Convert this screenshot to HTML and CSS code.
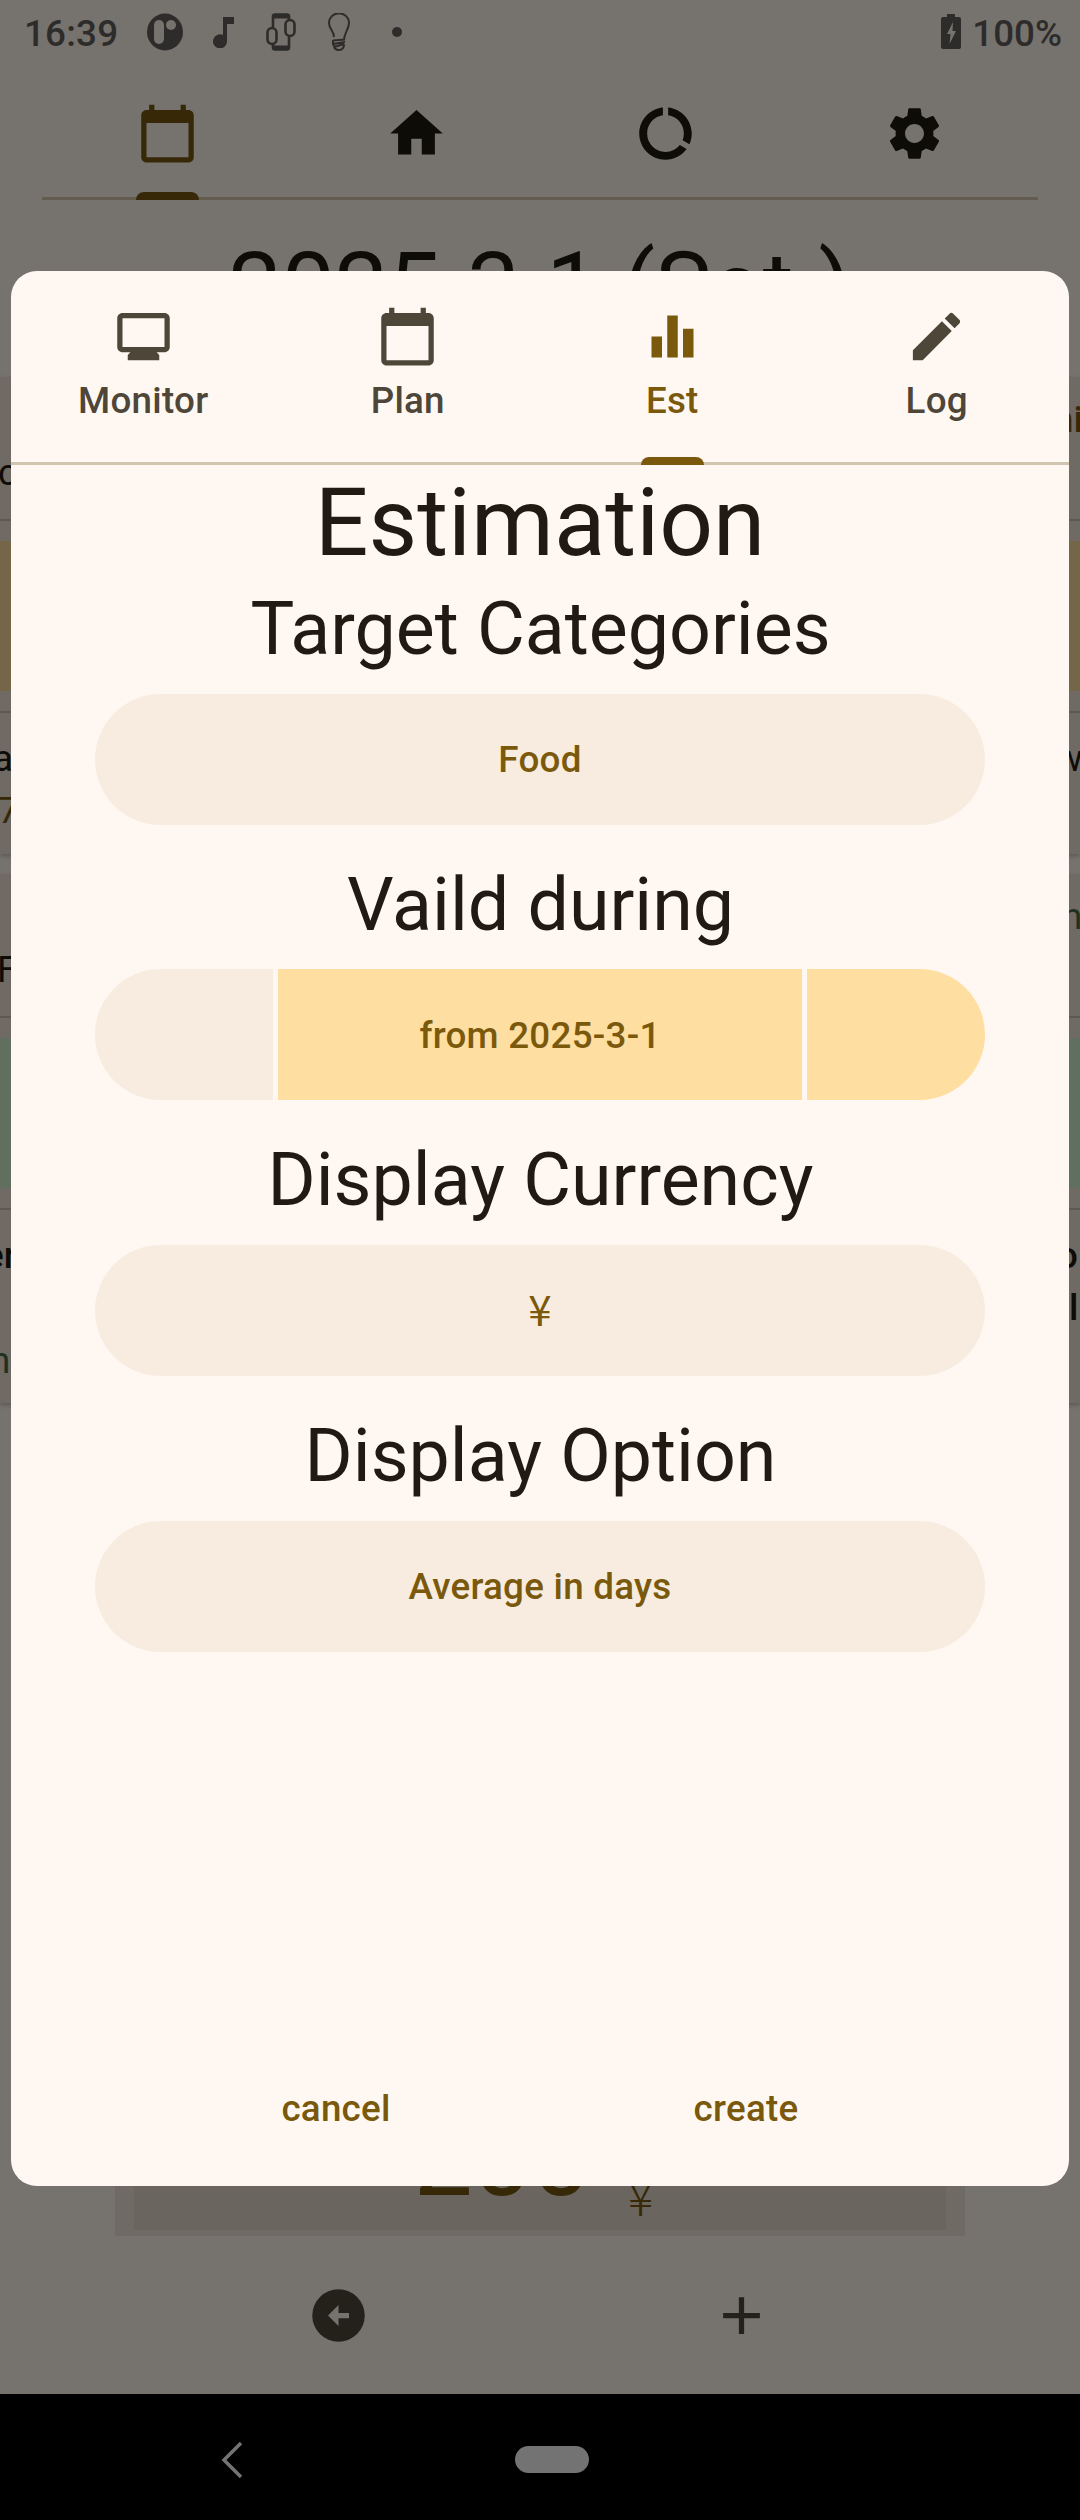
FILE: index.html
```html
<!DOCTYPE html>
<html lang="en">
<head>
<meta charset="utf-8">
<title>Estimation</title>
<link rel="stylesheet" href="styles.css">
</head>
<body>
<div class="screen">
  <header class="status">
    <span class="clock">16:39</span>
    <svg class="s-icon" width="36" height="38" viewBox="0 0 36 38"><ellipse cx="18" cy="19" rx="18" ry="18.5" fill="#2d2c2a"/><rect x="7" y="7" width="10" height="24" rx="5" fill="#76726e"/><circle cx="24" cy="12" r="5" fill="#76726e"/></svg>
    <svg class="s-note" width="21" height="31" viewBox="0 0 21 31"><path d="M10 0h11v7h-7v17a7 7 0 1 1-4-6z" fill="#2d2c2a"/></svg>
    <svg class="s-watch" width="30" height="38" viewBox="0 0 30 38" fill="none" stroke="#2d2c2a" stroke-width="2.6"><path d="M7 14V3.500q0-2 2-2h12q2 0 2 2V7M23 24v10.500q0 2-2 2H9q-2 0-2-2V31"/><path d="M7 3.500h16M7 34.500h16" stroke-width="4"/><rect x="1.500" y="15" width="9" height="16" rx="4.500"/><rect x="19.500" y="7" width="9" height="16" rx="4.500"/></svg>
    <svg class="s-bulb" width="24" height="38" viewBox="0 0 24 38" fill="none" stroke="#2d2c2a" stroke-width="2"><path d="M7 24C7 18 2 16 2 10a9.800 9.500 0 0 1 20 0c0 6-5 10-5 17"/><path d="M6 27.500l12-1M6 27v4l12-2M7 34l10-3M7 32q0 5 5 5 5 0 5-6"/></svg>
    <span class="s-dot"></span>
    <svg class="s-batt" width="20" height="35" viewBox="0 0 20 35"><path d="M6 0h8v3h4q2 0 2 2v28q0 2-2 2H2q-2 0-2-2V5q0-2 2-2h4z" fill="#2d2c2a"/><path d="M12 8L6 20h3.500L8.500 30 15 17h-3.500z" fill="#76726e"/></svg>
    <span>100%</span>
  </header>

  <nav class="main-tabs">
    <div class="main-tab active"><svg class="icon" viewBox="0 0 24 24"><path d="M20 3h-1V1h-2v2H7V1H5v2H4c-1.100 0-2 .9-2 2v16c0 1.100.9 2 2 2h16c1.100 0 2-.9 2-2V5c0-1.100-.9-2-2-2zm0 18H4V8h16v13z"/></svg></div>
    <div class="main-tab"><svg class="icon" viewBox="0 0 24 24"><path d="M10 20v-6h4v6h5v-8h3L12 3 2 12h3v8z"/></svg></div>
    <div class="main-tab"><svg class="icon" viewBox="0 0 24 24"><path d="M13 2.050v3.030c3.390.49 6 3.390 6 6.920 0 .9-.18 1.750-.48 2.540l2.600 1.530c.56-1.240.88-2.620.88-4.070 0-5.180-3.950-9.450-9-9.950zM12 19c-3.870 0-7-3.130-7-7 0-3.530 2.610-6.430 6-6.920V2.050c-5.060.5-9 4.760-9 9.950 0 5.520 4.470 10 9.990 10 3.310 0 6.240-1.610 8.060-4.090l-2.600-1.530C16.170 17.980 14.210 19 12 19z"/></svg></div>
    <div class="main-tab"><svg class="icon" viewBox="0 0 24 24"><path d="M19.140 12.940c.04-.3.06-.61.06-.94 0-.32-.02-.64-.07-.94l2.030-1.580c.18-.14.23-.41.12-.61l-1.920-3.320c-.12-.22-.37-.29-.59-.22l-2.390.96c-.5-.38-1.030-.7-1.620-.94l-.36-2.540c-.04-.24-.24-.41-.48-.41h-3.840c-.24 0-.43.17-.47.41l-.36 2.540c-.59.24-1.130.57-1.620.94l-2.390-.96c-.22-.08-.47 0-.59.22L2.740 8.870c-.12.21-.08.47.12.61l2.030 1.580c-.05.3-.09.63-.09.94s.02.64.07.94l-2.030 1.580c-.18.14-.23.41-.12.61l1.920 3.320c.12.22.37.29.59.22l2.390-.96c.5.38 1.030.7 1.620.94l.36 2.540c.05.24.24.41.48.41h3.840c.24 0 .44-.17.47-.41l.36-2.540c.59-.24 1.130-.56 1.620-.94l2.390.96c.22.08.47 0 .59-.22l1.920-3.320c.12-.22.07-.47-.12-.61l-2.010-1.580zM12 15.600c-1.980 0-3.600-1.620-3.600-3.600s1.620-3.600 3.600-3.600 3.600 1.620 3.600 3.600-1.620 3.600-3.600 3.600z"/></svg></div>
  </nav>

  <h1 class="date">2025-3-1 (Sat.)</h1>

  <section class="cards">
    <article class="card">
      <div class="row top"><p class="edge low c">c</p><p class="edge ni">ni</p></div>
      <div class="band gold"></div>
      <div class="row bottom"><div class="edge"><p class="a">a</p><p class="seven">7</p></div><p class="edge w">w</p></div>
    </article>
    <article class="card">
      <div class="row top"><p class="edge low f">F</p><p class="edge n">n</p></div>
      <div class="band green"></div>
      <div class="row bottom tall"><div class="edge"><p class="er">er</p><p class="en">n</p></div><div class="edge"><p class="o">o</p><p class="l">l</p></div></div>
    </article>
  </section>

  <section class="total"><div class="total-inner"><span class="amount">200</span><span class="yen">¥</span></div></section>

  <div class="actions">
    <svg class="icon" viewBox="0 0 24 24"><path fill-rule="evenodd" d="M12 2a10 10 0 1 0 0 20 10 10 0 0 0 0-20zM12 16l-4-4 4-4v3h4v2h-4z"/></svg>
    <svg class="icon" viewBox="0 0 24 24"><path d="M19 13h-6v6h-2v-6H5v-2h6V5h2v6h6v2z"/></svg>
  </div>

  <footer class="sysnav">
    <svg class="back" width="22" height="38" viewBox="0 0 22 38"><path d="M20 2L3 19l17 17" fill="none" stroke="#737373" stroke-width="3.500"/></svg>
    <span class="home-pill"></span>
  </footer>

  <div class="dialog">
    <nav class="tabs">
      <div class="tab"><svg class="icon" viewBox="0 0 24 24"><path d="M20 3H4c-1.100 0-2 .9-2 2v11c0 1.100.9 2 2 2h3l-1 1v2h12v-2l-1-1h3c1.100 0 2-.9 2-2V5c0-1.100-.9-2-2-2zm0 13H4V5h16v11z"/></svg><span>Monitor</span></div>
      <div class="tab"><svg class="icon" viewBox="0 0 24 24"><path d="M20 3h-1V1h-2v2H7V1H5v2H4c-1.100 0-2 .9-2 2v16c0 1.100.9 2 2 2h16c1.100 0 2-.9 2-2V5c0-1.100-.9-2-2-2zm0 18H4V8h16v13z"/></svg><span>Plan</span></div>
      <div class="tab active"><svg class="icon" viewBox="0 0 24 24"><path d="M10 20h4V4h-4v16zm-6 0h4v-8H4v8zM16 9v11h4V9h-4z"/></svg><span>Est</span></div>
      <div class="tab"><svg class="icon" viewBox="0 0 24 24"><path d="M3 17.250V21h3.750L17.810 9.940l-3.750-3.750L3 17.250zM20.710 7.040c.39-.39.39-1.020 0-1.410l-2.340-2.340c-.39-.39-1.020-.39-1.410 0l-1.830 1.830 3.750 3.750 1.830-1.830z"/></svg><span>Log</span></div>
    </nav>
    <h2 class="title">Estimation</h2>
    <div class="form">
      <h3>Target Categories</h3>
      <div class="pill">Food</div>
      <h3>Vaild during</h3>
      <div class="segments"><span class="seg"></span><span class="seg mid on">from 2025-3-1</span><span class="seg on"></span></div>
      <h3>Display Currency</h3>
      <div class="pill cjk">¥</div>
      <h3>Display Option</h3>
      <div class="pill">Average in days</div>
    </div>
    <div class="buttons"><span>cancel</span><span>create</span></div>
  </div>
</div>
</body>
</html>
```
FILE: styles.css
```css
* { box-sizing: border-box; margin: 0; padding: 0; }

body { font-family: Roboto, "Liberation Sans", sans-serif; }

.screen {
  position: relative;
  width: 1080px;
  height: 2520px;
  overflow: hidden;
  display: flex;
  flex-direction: column;
  background: #76726e;
  color: #0d0c07;
}

.icon { width: 63px; height: 63px; fill: currentColor; display: block; }

/* Status bar */
.status {
  height: 84px;
  display: flex;
  align-items: flex-start;
  padding: 12px 18px 0 24px;
  font-size: 36.75px;
  line-height: 43px;
  font-weight: 500;
  color: #2d2c2a;
}
.clock { width: 123px; letter-spacing: 0.2px; }
.s-icon { margin-top: 1px; }
.s-note { margin: 5px 0 0 30px; }
.s-watch { margin: 1px 0 0 32px; }
.s-bulb { margin: 1px 0 0 31px; }
.s-dot { width: 10px; height: 10px; border-radius: 50%; background: currentColor; margin: 15px auto 0 41px; }
.s-batt { margin: 2px 11px 0 0; }

/* Page tabs */
.main-tabs {
  display: grid;
  grid-template-columns: repeat(4, 1fr);
  height: 116px;
  margin: 0 42px;
  background: linear-gradient(#655c51, #655c51) bottom / 100% 3px no-repeat;
}
.main-tab { display: flex; flex-direction: column; align-items: center; justify-content: space-between; padding: 18px 0 0 1px; }
.main-tab.active { color: #372808; }
.main-tab.active::after, .tab.active::after {
  content: "";
  width: 63px;
  height: 8px;
  border-radius: 8px 8px 0 0;
  background: currentColor;
}

.date { height: 177px; padding-top: 29px; font-size: 94.5px; line-height: 115.5px; font-weight: 400; text-align: center; }

/* Day cards behind the dialog */
.cards { display: flex; flex-direction: column; gap: 20.5px; height: 1759px; flex: none; }
.card { background: #6f6a64; box-shadow: 0 2px 4px #5c5955; }
.row { display: flex; justify-content: space-between; overflow: hidden; font-size: 36.75px; line-height: 52px; white-space: nowrap; }
.row.top { height: 144px; padding-top: 17px; border-bottom: 2px solid #5d5852; }
.row.bottom { height: 143px; padding-top: 20px; border-top: 2px solid #5d5852; }
.row.bottom.tall { height: 195px; }
.band { height: 149.5px; margin: 20px 0; }
.gold { background: #75664a; }
.green { background: #606f5e; }
.edge { width: 11px; }
.low { padding-top: 53px; }
.c { text-indent: -2px; }
.ni { text-indent: -16px; color: #372808; font-weight: 500; }
.a { text-indent: -7px; }
.seven { text-indent: -2px; color: #372808; }
.w { text-indent: -14px; }
.f { text-indent: -3px; }
.n { text-indent: -7px; color: #22301f; }
.er { text-indent: -16px; font-weight: 500; }
.en { padding-top: 53px; text-indent: -10px; color: #22301f; }
.o { text-indent: -12px; font-weight: 500; }
.l { text-indent: 0; font-weight: 500; }

/* Total */
.total { height: 100px; flex: none; margin: 0 115px; padding: 0 19px 6px; background: #6f6a64; display: flex; }
.total-inner { flex: 1; display: flex; align-items: flex-start; justify-content: center; gap: 37px; padding-right: 13px; background: #6a655e; color: #372808; }
.amount { margin-top: -31px; font-size: 105px; line-height: 110px; }
.yen { margin-top: 29px; font-family: "Noto Sans CJK SC", sans-serif; font-weight: 300; font-size: 48px; line-height: 60px; }

.actions { flex: 1; display: grid; grid-template-columns: 402.6px 402.6px; place-items: center; padding-left: 137.3px; color: #24211a; }
.sysnav { height: 126px; flex: none; background: #000; display: flex; align-items: center; padding: 5px 0 0 221px; }
.home-pill { width: 74px; height: 27px; border-radius: 14px; background: #737373; margin-left: 272px; }

/* Dialog */
.dialog {
  position: absolute;
  left: 11px;
  top: 271px;
  width: 1058px;
  height: 1915px;
  border-radius: 26px;
  background: #fff8f2;
  color: #1f1b13;
  display: flex;
  flex-direction: column;
}
.tabs {
  display: grid;
  grid-template-columns: repeat(4, 1fr);
  height: 194px;
  background: linear-gradient(#d1c5b0, #d1c5b0) bottom / 100% 3px no-repeat;
}
.tab {
  display: flex;
  flex-direction: column;
  align-items: center;
  padding-top: 34px;
  color: #4e4639;
  font-size: 36.75px;
  line-height: 52px;
  font-weight: 500;
  letter-spacing: 0.26px;
}
.tab span { margin-top: 7px; }
.tab.active { color: #7a590c; }
.tab.active::after { margin-top: auto; }
.title { font-size: 94.5px; line-height: 115.5px; font-weight: 400; text-align: center; }
.form { padding: 1.6px 84px 0; display: flex; flex-direction: column; }
.form h3 { font-size: 73.5px; line-height: 94.5px; font-weight: 400; text-align: center; padding-left: 1px; margin-bottom: 17px; }
.pill, .segments { height: 131.25px; margin-bottom: 32.9px; color: #7a590c; font-size: 36.75px; font-weight: 500; letter-spacing: 0.26px; }
.pill { display: flex; align-items: center; justify-content: center; padding-top: 1px; border-radius: 66px; background: #f7ecdf; }
.cjk { font-family: "Noto Sans CJK SC", sans-serif; font-size: 42px; font-weight: 400; padding-bottom: 7px; }
.segments { display: grid; grid-template-columns: 178px 524px 178px; gap: 5px; border-radius: 66px; overflow: hidden; }
.seg { display: flex; align-items: center; justify-content: center; padding-top: 2px; background: #f7ecdf; }
.seg.on { background: #ffdea1; }
.buttons {
  display: grid;
  grid-template-columns: 410px 410px;
  justify-content: center;
  margin-top: auto;
  padding: 0 0 51px 2px;
  text-align: center;
  color: #7a590c;
  font-size: 36.75px;
  line-height: 52px;
  font-weight: 500;
  letter-spacing: 0.26px;
}
```
